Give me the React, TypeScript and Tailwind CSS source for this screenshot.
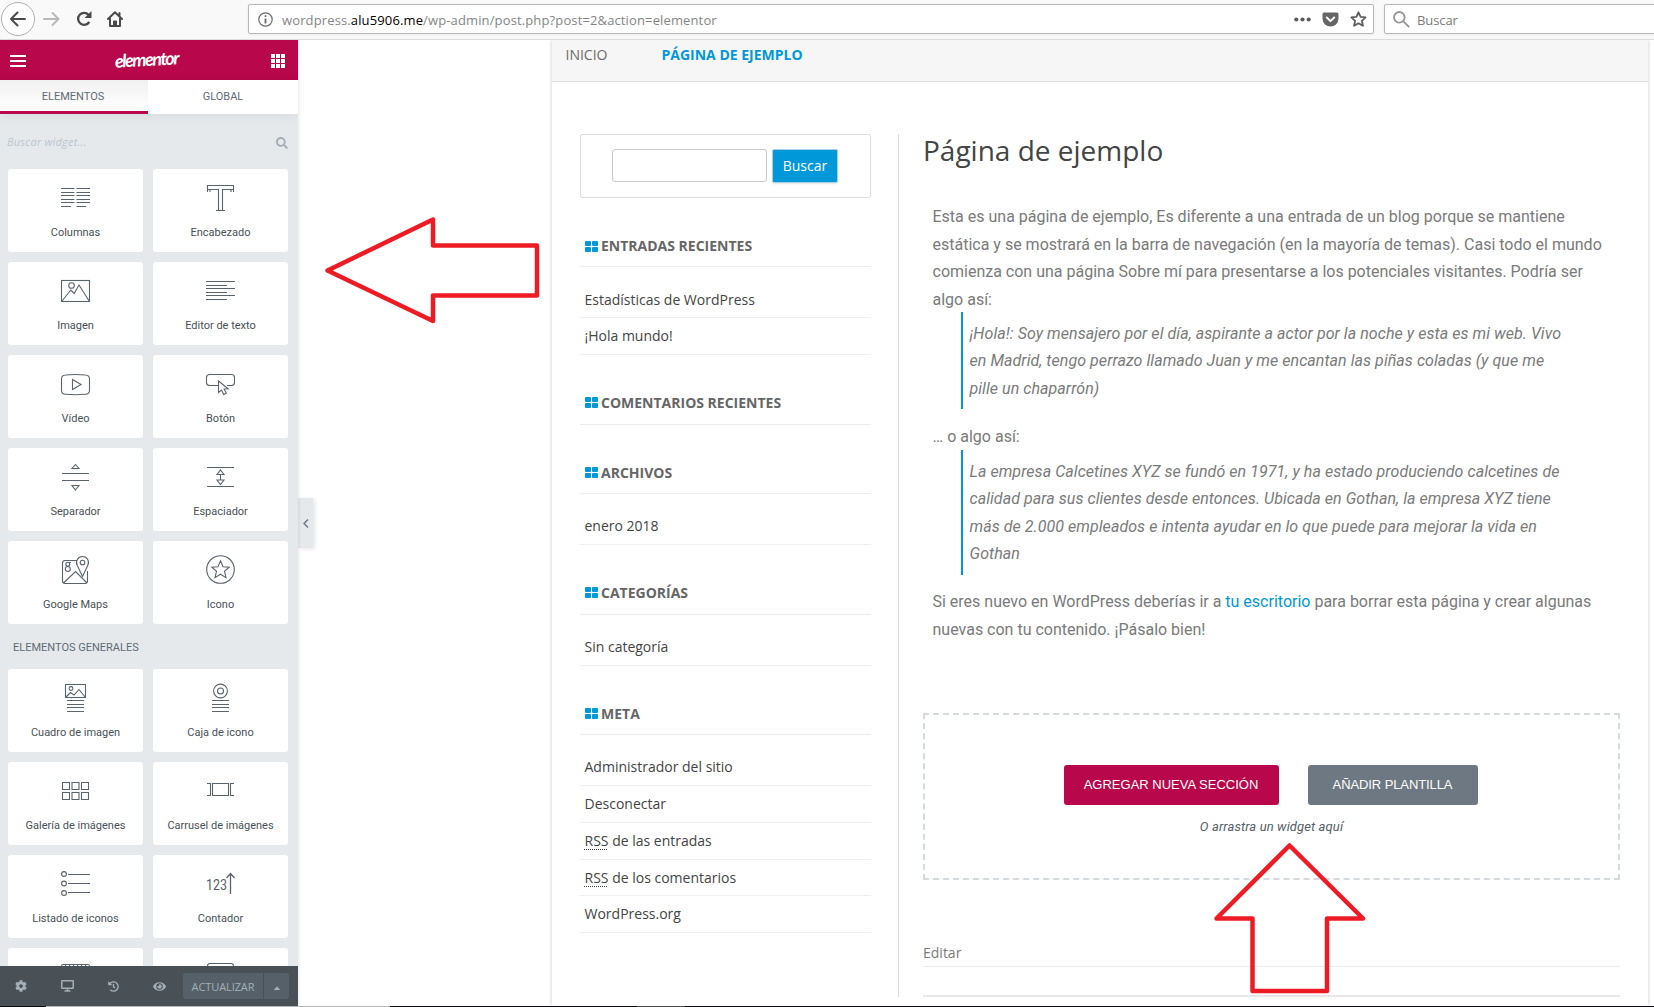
import React from "react";
import { FaCog, FaEye, FaHistory, FaSearch, FaCaretUp } from "react-icons/fa";

type Widget = { label: string; icon: React.ReactNode };

const Columns = (
  <path d="M0 5.5h13.5M15.5 5.5H29M0 9.5h13.5M15.5 9.5H29M0 12.5h13.5M15.5 12.5H29M0 16.5h13.5M15.5 16.5H29M0 19.5h13.5M15.5 19.5H29M0 23.5h10M15.5 23.5h9.5" />
);
const Heading = (
  <path d="M1.5 9V2.5h26V9M1.5 6.5H4V9M25 9V6.5h2.5M4 6.5h8.5v20.5M25 6.5h-8.5v20.5M10 27.5h9" />
);
const Picture = (
  <>
    <rect x="0.5" y="4.5" width="28" height="21" />
    <circle cx="10.5" cy="9.5" r="2.8" />
    <path d="M1 25l8.8-11 3.4 3.5L18 9l10.5 16.5" />
  </>
);
const TextLines = (
  <path d="M0 5.5h29M0 9.5h21M0 12.5h29M0 16.5h21M0 19.5h29M0 23.5h21" />
);
const Video = (
  <>
    <path d="M4.5 6Q14.5 5 24.5 6Q28.5 6.3 28.5 10V21.5Q28.5 25 24.5 25.3Q14.5 26.2 4.5 25.3Q0.5 25 0.5 21.5V10Q0.5 6.3 4.5 6Z" />
    <path d="M11.5 10.5v10l8.500-5z" />
  </>
);
const Button = (
  <>
    <path d="M12 16.5H3.5Q0.5 16.5 0.5 13.5V8.5Q0.5 5.5 3.5 5.5h22Q28.5 5.5 28.5 8.5v5Q28.5 16.5 25.5 16.5H21" />
    <path d="M12.5 12v11.500l3-2.500 2.200 4.500 2.600-1.300-2.200-4.200 4-.3z" />
  </>
);
const Divider = (
  <path d="M1 11.500h27M1 18.500h27M14.500 2.500l3.500 4h-7zM14.500 28l3.500-4.500h-7z" />
);
const Spacer = (
  <path d="M1 5.500h27M1 24.500h27M14.500 8l3.500 4.500h-7zM14.500 22.500l3.500-4.500h-7zM14.500 12.500v5.500" />
);
const Maps = (
  <>
    <path d="M16 5.500H4Q1.500 5.500 1.500 8v18q0 2.500 2.500 2.500h20q2.500 0 2.500-2.500V16M2.500 28L14.500 16.500 26 28" />
    <path d="M21.500 21.500L16.300 10.500A6 6 0 1 1 26.700 10.500Z" />
    <circle cx="21.500" cy="7.500" r="2.300" />
    <circle cx="6.800" cy="9.300" r="2" />
    <circle cx="6.800" cy="14" r="2.500" />
    <path d="M8 7.500h2" />
  </>
);
const Star = (
  <>
    <circle cx="14.500" cy="14.500" r="13.800" />
    <path d="M14.500 5.800l2.500 5.900 6.200.5-4.700 4.100 1.500 6.300-5.500-3.400-5.500 3.400 1.500-6.300-4.700-4.100 6.200-.5z" />
  </>
);
const ImageBox = (
  <>
    <rect x="4.500" y="1.500" width="20" height="13" />
    <circle cx="10" cy="5.500" r="1.900" />
    <path d="M5 14l4.500-4.500 3.500 2.500 5-5.500 6.500 8M6 17.500h17M6 21.500h17M6 24.500h17M6 28.500h17" />
  </>
);
const IconBox = (
  <>
    <circle cx="14.500" cy="8" r="6.900" />
    <circle cx="14.500" cy="8" r="3" />
    <path d="M6 17.500h17M6 21.500h17M6 24.500h17M6 28.500h17" />
  </>
);
const Gallery = (
  <path d="M1.500 6.500h7v7h-7zM11 6.500h7v7h-7zM20.500 6.500h7v7h-7zM1.500 16.500h7v7h-7zM11 16.500h7v7h-7zM20.500 16.500h7v7h-7z" />
);
const Carousel = (
  <path d="M6.500 7.500h16v12h-16zM1 7.500h3.500v12H1M28 7.500h-3.500v12H28" />
);
const IconList = (
  <>
    <circle cx="3" cy="5" r="2.400" />
    <circle cx="3" cy="14.500" r="2.400" />
    <circle cx="3" cy="24" r="2.400" />
    <path d="M7 5.500h22M7 14.500h22M7 23.500h22" />
  </>
);
const Counter = (
  <>
    <text x="0" y="21" fill="#556068" stroke="none" className="text-[14px]" textLength="21" lengthAdjust="spacingAndGlyphs">123</text>
    <path d="M24.500 25V4.500M20.500 9l4-4.500 4 4.500" strokeWidth="1.300" />
  </>
);
const Progress = (
  <path d="M0.500 6V4q0-1.500 1.500-1.500h25q1.500 0 1.500 1.500v2M5 3l-2 3M9 3l-2 3M13 3l-2 3M17 3l-2 3M21 3l-2 3M25 3l-2 3" />
);
const Quote = <path d="M1.500 10V4q0-2.500 2.500-2.500h21q2.500 0 2.500 2.500v6" />;

const basic: Widget[] = [
  { label: "Columnas", icon: Columns },
  { label: "Encabezado", icon: Heading },
  { label: "Imagen", icon: Picture },
  { label: "Editor de texto", icon: TextLines },
  { label: "Vídeo", icon: Video },
  { label: "Botón", icon: Button },
  { label: "Separador", icon: Divider },
  { label: "Espaciador", icon: Spacer },
  { label: "Google Maps", icon: Maps },
  { label: "Icono", icon: Star },
];

const general: Widget[] = [
  { label: "Cuadro de imagen", icon: ImageBox },
  { label: "Caja de icono", icon: IconBox },
  { label: "Galería de imágenes", icon: Gallery },
  { label: "Carrusel de imágenes", icon: Carousel },
  { label: "Listado de iconos", icon: IconList },
  { label: "Contador", icon: Counter },
  { label: "", icon: Progress },
  { label: "", icon: Quote },
];

function WidgetGrid({ items }: { items: Widget[] }) {
  return (
    <div className="grid grid-cols-[135px_135px] gap-[10px] pl-2">
      {items.map((w, i) => (
        <div key={i} className="flex h-[83px] flex-col items-center rounded-[3px] bg-white pt-[14px]">
          <svg
            width="29"
            height="29"
            viewBox="0 0 29 29"
            fill="none"
            stroke="#5a646c"
            strokeWidth="1.1"
            className="shrink-0 overflow-visible"
          >
            {w.icon}
          </svg>
          <span className="mt-[13px] text-[11px] leading-4 whitespace-nowrap text-[#495157]">{w.label}</span>
        </div>
      ))}
    </div>
  );
}

function BrowserBar() {
  return (
    <header className="flex h-10 shrink-0 items-start border-b border-[#dcdcdc] bg-[#f9f9f9] font-['Open_Sans',sans-serif]">
      <div className="mt-[2px] ml-px flex h-[34px] w-[34px] shrink-0 items-center justify-center rounded-full border border-[#b0b0b0] bg-white">
        <svg width="16" height="16" viewBox="0 0 16 16" fill="none" stroke="#4a4a4b" strokeWidth="2" strokeLinecap="round" strokeLinejoin="round">
          <path d="M15 8H1.500M7.500 1.500L1 8l6.500 6.500" />
        </svg>
      </div>
      <svg className="mt-[11px] ml-2 shrink-0" width="17" height="16" viewBox="0 0 17 16" fill="none" stroke="#b9b9b9" strokeWidth="2" strokeLinecap="round" strokeLinejoin="round">
        <path d="M1 8h14.500M9.500 2l6 6-6 6" />
      </svg>
      <svg className="mt-[11px] ml-4 shrink-0" width="16" height="16" viewBox="0 0 16 16" fill="none" stroke="#4a4a4b" strokeWidth="2.300">
        <path d="M13.300 10.800A6 6 0 1 1 12.600 3.800" />
        <path d="M15.500 0v7h-7z" fill="#4a4a4b" stroke="none" />
      </svg>
      <svg className="mt-[11px] ml-[15px] shrink-0" width="16" height="16" viewBox="0 0 16 16" fill="none" stroke="#4a4a4b" strokeWidth="2" strokeLinecap="round" strokeLinejoin="round">
        <path d="M1 8l7-6.700L15 8M3 7.500V15h10V7.500M12.500 2v2.500" />
        <path d="M6.500 15v-5h3v5z" fill="#4a4a4b" strokeWidth="1" />
      </svg>
      <div className="mt-1 ml-[125px] flex h-[30px] w-[1126px] shrink-0 items-center rounded-[2px] border border-[#b8b8b8] bg-white shadow-[0_1px_3px_rgba(0,0,0,0.06)]">
        <svg className="ml-[9px]" width="15" height="15" viewBox="0 0 15 15" fill="none" stroke="#6b6b6b" strokeWidth="1.200">
          <circle cx="7.500" cy="7.500" r="6.700" />
          <path d="M7.500 6.500v5M7.500 3.300v1.700" strokeWidth="1.800" />
        </svg>
        <span className="ml-[9px] pt-[2px] text-[13px] leading-5 tracking-[0.13px] whitespace-nowrap text-[#858585]">
          wordpress.<span className="text-black">alu5906.me</span>/wp-admin/post.php?post=2&amp;action=elementor
        </span>
        <div className="mr-[6px] ml-auto flex items-center">
          <svg width="17" height="5" viewBox="0 0 17 5" fill="#5c5c5d">
            <circle cx="2.300" cy="2.500" r="2.100" />
            <circle cx="8.500" cy="2.500" r="2.100" />
            <circle cx="14.700" cy="2.500" r="2.100" />
          </svg>
          <svg className="ml-[11px]" width="17" height="15" viewBox="0 0 17 15">
            <path d="M2 .5h13q1.500 0 1.500 1.500v4.500a8 8 0 0 1-16 0V2Q.5 .5 2 .5z" fill="#666667" />
            <path d="M4.800 5.500l3.700 3.600 3.700-3.600" fill="none" stroke="#fff" strokeWidth="2" strokeLinecap="round" strokeLinejoin="round" />
          </svg>
          <svg className="ml-[11px]" width="17" height="16" viewBox="0 0 17 16" fill="none" stroke="#5c5c5d" strokeWidth="1.800" strokeLinejoin="round">
            <path d="M8.500 1.300l2.100 4.500 5 .6-3.700 3.400 1 5-4.400-2.500-4.400 2.500 1-5-3.700-3.400 5-.6z" />
          </svg>
        </div>
      </div>
      <div className="mt-1 ml-[10px] flex h-[30px] w-[300px] shrink-0 items-center rounded-[2px] border border-[#b8b8b8] bg-white shadow-[0_1px_3px_rgba(0,0,0,0.06)]">
        <svg className="ml-2" width="17" height="17" viewBox="0 0 17 17" fill="none" stroke="#959595" strokeWidth="1.800">
          <circle cx="6.300" cy="6.300" r="5.300" />
          <path d="M10.200 10.200l6 6" />
        </svg>
        <span className="ml-[7px] pt-[2px] text-[13px] leading-5 tracking-[-0.1px] text-[#7b7b7b]">Buscar</span>
      </div>
    </header>
  );
}

function Sidebar() {
  return (
    <aside className="z-10 flex w-[298px] shrink-0 flex-col overflow-hidden bg-[#e6e9ec] font-[Roboto,sans-serif] shadow-[0_0_4px_rgba(0,0,0,0.14)]">
      <div className="flex h-10 shrink-0 items-center bg-[#b8074b] pt-px pr-[13px] pl-[10px]">
        <div className="flex w-4 flex-col gap-[3px]">
          <div className="h-[2px] bg-white" />
          <div className="h-[2px] bg-white" />
          <div className="h-[2px] bg-white" />
        </div>
        <span className="mr-auto ml-[89px] block -rotate-3 pb-1 font-[Lato,sans-serif] text-[18px] leading-5 font-bold tracking-[-1.500px] text-white italic">elementor</span>
        <div className="grid grid-cols-3 gap-[1px]">
          {Array.from({ length: 9 }, (_, i) => (
            <div key={i} className="h-[4px] w-[4px] bg-white" />
          ))}
        </div>
      </div>
      <div className="z-10 flex h-[34px] shrink-0 bg-white text-[11px] leading-[14px] text-[#5f6b75] shadow-[0_1px_12px_rgba(0,0,0,0.08)]">
        <div className="flex w-[148px] justify-center border-b-[3px] border-[#b8074b] bg-linear-to-b from-[#f1f1f1] to-white pt-[10px] pr-[2px]">ELEMENTOS</div>
        <div className="flex w-[150px] justify-center pt-[10px]">GLOBAL</div>
      </div>
      <div className="flex h-[55px] shrink-0 items-center justify-between pt-[2px] pr-[10px] pl-[7px]">
        <span className="pb-[2px] font-['Open_Sans',sans-serif] text-[11px] leading-4 tracking-[0.2px] text-[#bcc5cc] italic">Buscar widget...</span>
        <FaSearch className="h-3 w-3 text-[#a4afb7]" />
      </div>
      <WidgetGrid items={basic} />
      <h2 className="flex h-[45px] shrink-0 items-center pt-[2px] pl-[13px] text-[11px] leading-4 text-[#5f6b75]">ELEMENTOS GENERALES</h2>
      <div className="h-[297px] shrink-0 overflow-hidden">
        <WidgetGrid items={general} />
      </div>
      <div className="flex h-10 shrink-0 items-center bg-[#495157] text-[#a4afb7]">
        <FaCog className="ml-[15px] h-3 w-3" />
        <svg className="ml-[34px]" width="13" height="12" viewBox="0 0 13 12" fill="none" stroke="currentColor" strokeWidth="1.500">
          <rect x=".75" y=".75" width="11.500" height="7.500" rx=".5" />
          <path d="M6.500 8v2.500M3.500 11h6" />
        </svg>
        <FaHistory className="ml-[34px] h-[11px] w-[11px]" />
        <FaEye className="ml-[34px] h-[13px] w-[13px]" />
        <div className="ml-[17px] flex h-[26px] w-[80px] items-center justify-center rounded-l-[3px] bg-[#556068] pt-px font-['Open_Sans',sans-serif] text-[11px] leading-4 tracking-[-0.1px]">ACTUALIZAR</div>
        <div className="ml-px flex h-[26px] w-[25px] items-center justify-center rounded-r-[3px] bg-[#556068]">
          <FaCaretUp className="mt-[3px] h-[10px] w-[10px]" />
        </div>
      </div>
    </aside>
  );
}

function WidgetTitle({ children, className = "" }: { children: React.ReactNode; className?: string }) {
  return (
    <h3 className={`flex h-[43px] items-center border-b border-[#ececec] pl-[4.500px] text-[14px] leading-[42px] font-bold text-[#666] ${className}`}>
      <span className="mr-[3.500px] grid grid-cols-2 gap-px">
        <i className="h-[5px] w-[6px] rounded-[1px] bg-[#0098d8]" />
        <i className="h-[5px] w-[6px] rounded-[1px] bg-[#0098d8]" />
        <i className="h-[5px] w-[6px] rounded-[1px] bg-[#0098d8]" />
        <i className="h-[5px] w-[6px] rounded-[1px] bg-[#0098d8]" />
      </span>
      {children}
    </h3>
  );
}

function List({ items }: { items: React.ReactNode[] }) {
  return (
    <ul className="mt-[14.500px]">
      {items.map((t, i) => (
        <li key={i} className="h-[36.700px] border-b border-[#f0f0f0] pl-[4.500px] text-[14px] leading-[35px] text-[#444]">
          {t}
        </li>
      ))}
    </ul>
  );
}

const Rss = () => (
  <abbr className="underline decoration-dotted decoration-1 underline-offset-[3px]">RSS</abbr>
);

function BlogSidebar() {
  return (
    <div className="w-[291px] shrink-0">
      <div className="flex h-[64px] justify-center rounded-[2px] border border-[#dedede] pt-[14px] pr-px">
        <div className="h-[33px] w-[155px] rounded-[3px] border border-[#c8c8c8] bg-white" />
        <div className="ml-[5px] flex h-[34px] w-[66px] items-center justify-center rounded-[2px] border border-[#a9cfe2] bg-[#0098d8] pb-[2px] text-[14px] text-white shadow-[0_1px_2px_rgba(0,0,0,0.1)]">Buscar</div>
      </div>
      <section className="mt-[26px]">
        <WidgetTitle className="pt-[2px]">ENTRADAS RECIENTES</WidgetTitle>
        <List items={["Estadísticas de WordPress", "¡Hola mundo!"]} />
      </section>
      <section className="mt-[27.100px]">
        <WidgetTitle>COMENTARIOS RECIENTES</WidgetTitle>
      </section>
      <section className="mt-[26px]">
        <WidgetTitle className="pt-[2px]">ARCHIVOS</WidgetTitle>
        <List items={["enero 2018"]} />
      </section>
      <section className="mt-[26.800px]">
        <WidgetTitle>CATEGORÍAS</WidgetTitle>
        <List items={["Sin categoría"]} />
      </section>
      <section className="mt-[25.800px]">
        <WidgetTitle className="pt-[2px]">META</WidgetTitle>
        <List
          items={[
            "Administrador del sitio",
            "Desconectar",
            <><Rss /> de las entradas</>,
            <><Rss /> de los comentarios</>,
            "WordPress.org",
          ]}
        />
      </section>
    </div>
  );
}

function Lines({ lines }: { lines: React.ReactNode[] }) {
  return (
    <>
      {lines.map((l, i) => (
        <span key={i} className="block whitespace-nowrap">{l}</span>
      ))}
    </>
  );
}

function Blockquote({ lines, className = "" }: { lines: string[]; className?: string }) {
  return (
    <blockquote className={`ml-[28.500px] border-l-2 border-[#0098d8] pt-[7.400px] pb-[6.900px] pl-[6.500px] tracking-[0.058px] italic ${className}`}>
      <Lines lines={lines} />
    </blockquote>
  );
}

function Article() {
  return (
    <div className="ml-[27px] flex h-[863px] w-[722px] shrink-0 flex-col border-l border-[#dcdcdc] pl-6">
      <h1 className="text-[28px] leading-8 text-[#444]">Página de ejemplo</h1>
      <div className="mt-[37px] pl-[9.500px] font-[Roboto,sans-serif] text-[16px] leading-[27.500px] text-[#7a7a7a]">
        <p>
          <Lines
            lines={[
              "Esta es una página de ejemplo, Es diferente a una entrada de un blog porque se mantiene",
              "estática y se mostrará en la barra de navegación (en la mayoría de temas). Casi todo el mundo",
              "comienza con una página Sobre mí para presentarse a los potenciales visitantes. Podría ser",
              "algo así:",
            ]}
          />
        </p>
        <Blockquote
          className="-mt-[0.600px]"
          lines={[
            "¡Hola!: Soy mensajero por el día, aspirante a actor por la noche y esta es mi web. Vivo",
            "en Madrid, tengo perrazo llamado Juan y me encantan las piñas coladas (y que me",
            "pille un chaparrón)",
          ]}
        />
        <p className="mt-[13.600px]">… o algo así:</p>
        <Blockquote
          lines={[
            "La empresa Calcetines XYZ se fundó en 1971, y ha estado produciendo calcetines de",
            "calidad para sus clientes desde entonces. Ubicada en Gothan, la empresa XYZ tiene",
            "más de 2.000 empleados e intenta ayudar en lo que puede para mejorar la vida en",
            "Gothan",
          ]}
        />
        <p className="mt-[13.600px]">
          <Lines
            lines={[
              <>Si eres nuevo en WordPress deberías ir a <a className="text-[#0098d8]">tu escritorio</a> para borrar esta página y crear algunas</>,
              "nuevas con tu contenido. ¡Pásalo bien!",
            ]}
          />
        </p>
      </div>
      <div className="mt-auto flex h-[167px] shrink-0 flex-col items-center border-2 border-dashed border-[#d5dadf] pt-[50px]">
        <div className="mr-[2px] flex gap-[29px] font-['Liberation_Sans',sans-serif] text-[13px] leading-10 text-white">
          <div className="h-10 w-[215px] rounded-[3px] bg-[#b8074b] text-center">AGREGAR NUEVA SECCIÓN</div>
          <div className="h-10 w-[170px] rounded-[3px] bg-[#6d7882] text-center tracking-[-0.1px]">AÑADIR PLANTILLA</div>
        </div>
        <p className="mt-[14px] font-[Roboto,sans-serif] text-[13px] leading-4 tracking-[0.110px] text-[#556068] italic">O arrastra un widget aquí</p>
      </div>
      <div className="mt-[62px] h-[25px] shrink-0 border-b border-[#ececec] text-[14px] leading-[22px] text-[#7a7a7a]">Editar</div>
      <div className="h-[30px] shrink-0 border-b-2 border-[#e8e8e8]" />
    </div>
  );
}

export default function App() {
  return (
    <div className="relative flex h-[1007px] w-[1654px] flex-col overflow-hidden bg-white">
      <BrowserBar />
      <div className="flex h-[966px] shrink-0 overflow-hidden">
        <Sidebar />
        <div className="flex w-[254px] shrink-0 items-start pt-[458px]">
          <div className="flex h-[50px] w-[15px] items-center justify-center bg-[#e6e9ec] pl-px shadow-[2px_1px_4px_rgba(0,0,0,0.10)]">
            <svg width="6" height="9" viewBox="0 0 6 9" fill="none" stroke="#6d7882" strokeWidth="1.500">
              <path d="M5 .5l-4 4 4 4" />
            </svg>
          </div>
        </div>
        <main className="w-[1096px] shrink-0 bg-white font-['Open_Sans',sans-serif] shadow-[0_0_4px_rgba(0,0,0,0.22)]">
          <nav className="flex h-[42px] gap-[54px] border-b border-[#dedede] bg-[#f6f6f6] pl-[13.500px] text-[14px] leading-[30px] text-[#6a6a6a]">
            <span>INICIO</span>
            <span className="font-bold text-[#0098d8]">PÁGINA DE EJEMPLO</span>
          </nav>
          <div className="flex pt-[52px] pl-7">
            <BlogSidebar />
            <Article />
          </div>
        </main>
      </div>
      <div className="flex h-px shrink-0 bg-[#0c0c10]">
        <div className="ml-[46px] w-[344px] bg-[#b5b5b5]" />
        <div className="ml-[247px] w-[48px] bg-[#4a4a4a]" />
      </div>
      <svg className="pointer-events-none absolute inset-0 z-20" width="1654" height="1007" viewBox="0 0 1654 1007" fill="none" stroke="#ed1c24" strokeWidth="4.500" strokeLinejoin="round">
        <path d="M327.500 270.500L433 219.500V245.500H537V295.500H433V321Z" />
        <path d="M1289.500 845.500L1363 918.500H1327V991H1252.500V918.500H1216.500Z" />
      </svg>
    </div>
  );
}
